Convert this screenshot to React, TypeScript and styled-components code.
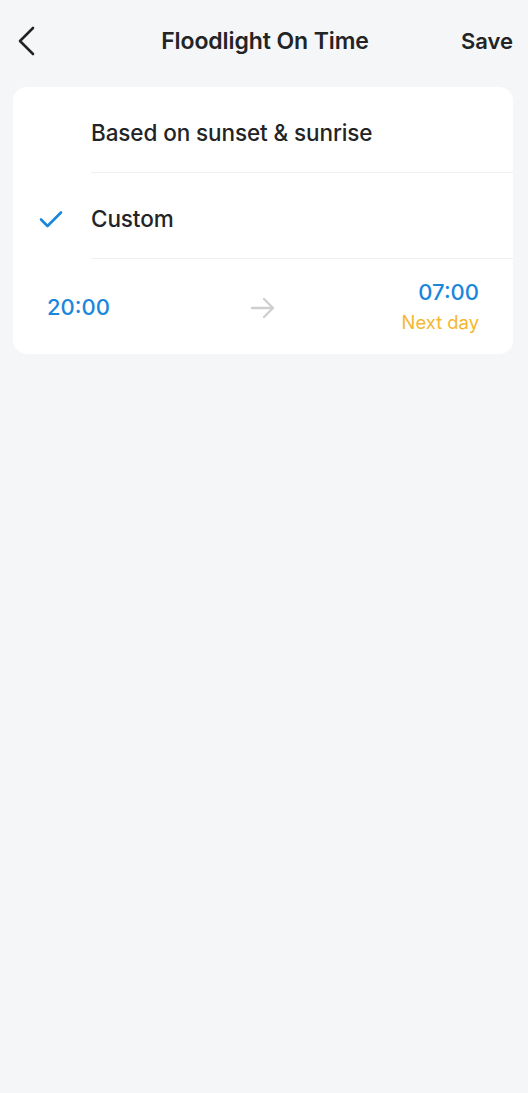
import styled, { createGlobalStyle } from 'styled-components';

const GlobalStyle = createGlobalStyle`
	html, body {
		margin: 0;
		padding: 0;
		background: #f5f6f8;
	}
	body {
		font-family: Inter, 'Noto Sans', sans-serif;
		color: #222426;
	}
`;

const options = [
	{ id: 'sun', label: 'Based on sunset & sunrise', checked: false },
	{ id: 'custom', label: 'Custom', checked: true },
];

const App = () => {
	return (
		<Page>
			<GlobalStyle />
			<Header>
				<BackButton aria-label="Back">
					<svg width="18" height="30" viewBox="0 0 18 30" fill="none">
						<path d="M16 2 L3 15 L16 28" stroke="#222426" strokeWidth="2.6" strokeLinecap="round" strokeLinejoin="round" />
					</svg>
				</BackButton>
				<Title>Floodlight On Time</Title>
				<SaveButton>Save</SaveButton>
			</Header>

			<Card>
				{options.map((opt) => (
					<OptionRow key={opt.id}>
						<CheckSlot>
							{opt.checked && (
								<svg width="24" height="18" viewBox="0 0 24 18" fill="none">
									<path d="M2 9.5 L8.5 16 L22 2.5" stroke="#1a87dc" strokeWidth="2.6" strokeLinecap="round" strokeLinejoin="round" />
								</svg>
							)}
						</CheckSlot>
						<OptionLabel>{opt.label}</OptionLabel>
					</OptionRow>
				))}
				<TimeRow>
					<TimeValue>20:00</TimeValue>
					<Arrow>
						<svg width="26" height="22" viewBox="0 0 26 22" fill="none">
							<path d="M2 11 H23 M14 2 L23 11 L14 20" stroke="#cfcfd1" strokeWidth="2.4" strokeLinecap="round" strokeLinejoin="round" />
						</svg>
					</Arrow>
					<EndTime>
						<TimeValue>07:00</TimeValue>
						<NextDay>Next day</NextDay>
					</EndTime>
				</TimeRow>
			</Card>
		</Page>
	);
};
export default App;

const Page = styled.div`
	min-height: 100vh;
	background: #f5f6f8;
	display: flex;
	flex-direction: column;
`;

const Header = styled.header`
	height: 87px;
	display: grid;
	grid-template-columns: 80px 1fr 80px;
	align-items: center;
	padding: 0 15px 6px 17px;
	box-sizing: border-box;
`;

const BackButton = styled.button`
	border: none;
	background: none;
	padding: 0;
	width: 30px;
	height: 36px;
	display: flex;
	align-items: center;
	cursor: pointer;
`;

const Title = styled.h1`
	margin: 0;
	text-align: center;
	font-size: 23px;
	font-weight: 600;
	color: #222426;
	letter-spacing: -0.1px;
`;

const SaveButton = styled.button`
	justify-self: end;
	border: none;
	background: none;
	padding: 0;
	font-family: inherit;
	font-size: 22px;
	font-weight: 600;
	color: #222426;
	cursor: pointer;
`;

const Card = styled.section`
	margin: 0 15px 0 13px;
	background: #ffffff;
	border-radius: 14px;
	overflow: hidden;
`;

const OptionRow = styled.div`
	display: flex;
	align-items: stretch;
	height: 86px;
`;

const CheckSlot = styled.div`
	width: 78px;
	display: flex;
	align-items: center;
	padding: 6px 0 0 26px;
	box-sizing: border-box;
`;

const OptionLabel = styled.div`
	flex: 1;
	display: flex;
	align-items: center;
	padding-top: 6px;
	font-size: 22.5px;
	font-weight: 500;
	color: #222426;
	border-bottom: 1px solid #eeeff1;
	letter-spacing: -0.1px;
`;

const TimeRow = styled.div`
	height: 95px;
	display: grid;
	grid-template-columns: 1fr auto 1fr;
	align-items: center;
	padding: 0 34px;
`;

const TimeValue = styled.div`
	font-size: 22px;
	font-weight: 500;
	color: #1a87dc;
`;

const Arrow = styled.div`
	display: flex;
	align-items: center;
	padding-top: 2px;
`;

const EndTime = styled.div`
	justify-self: end;
	display: flex;
	flex-direction: column;
	align-items: flex-end;
	gap: 6px;
	margin-top: -2px;
`;

const NextDay = styled.div`
	font-size: 18.4px;
	color: #f5b730;
`;
